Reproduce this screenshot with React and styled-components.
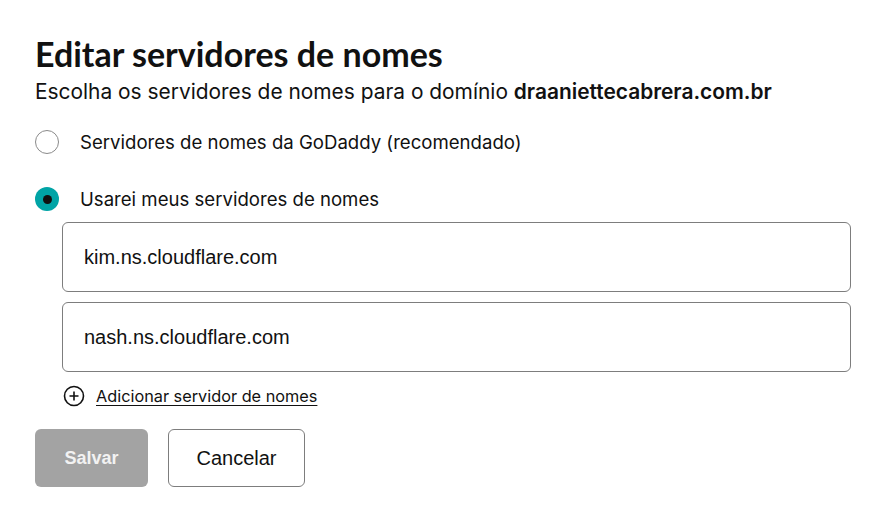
import styled, { createGlobalStyle } from "styled-components";

const GlobalStyle = createGlobalStyle`
  body {
    margin: 0;
    background: #ffffff;
    color: #111111;
    font-family: Inter, "Noto Sans", sans-serif;
  }
`;

const Page = styled.div`
  padding: 34px 35px 0 35px;
  width: 816px;
`;

const Title = styled.h1`
  margin: 0;
  font-family: Lato, "Noto Sans", sans-serif;
  font-size: 34px;
  font-weight: 700;
  line-height: 40px;
  color: #111111;
`;

const Subtitle = styled.p`
  margin: 4px 0 0 0;
  font-size: 20.9px;
  line-height: 28px;
  color: #111111;

  strong {
    font-weight: 600;
  }
`;

const Options = styled.div`
  margin-top: 24px;
  display: flex;
  flex-direction: column;
  gap: 33px;
`;

const RadioRow = styled.label`
  display: flex;
  align-items: center;
  gap: 21px;
  font-size: 18.6px;
  line-height: 24px;
  cursor: pointer;
`;

const RadioCircle = styled.span`
  box-sizing: border-box;
  width: 24px;
  height: 24px;
  border-radius: 50%;
  flex-shrink: 0;
  display: flex;
  align-items: center;
  justify-content: center;
  border: ${(p) => (p.$checked ? "none" : "1px solid #8a8a8a")};
  background: ${(p) => (p.$checked ? "#00a4a6" : "#ffffff")};

  &::after {
    content: "";
    display: ${(p) => (p.$checked ? "block" : "none")};
    width: 9px;
    height: 9px;
    border-radius: 50%;
    background: #111111;
  }
`;

const Fields = styled.div`
  margin: 11px 0 0 27px;
  display: flex;
  flex-direction: column;
  gap: 10px;
`;

const Field = styled.input`
  box-sizing: border-box;
  width: 789px;
  height: 70px;
  padding: 0 21px;
  border: 1px solid #7d7d7d;
  border-radius: 6px;
  font-family: "Liberation Sans", Arial, sans-serif;
  font-size: 20px;
  color: #111111;
  outline: none;
`;

const AddLink = styled.a`
  margin: 13px 0 0 28px;
  display: inline-flex;
  align-items: center;
  gap: 11px;
  font-size: 16.3px;
  color: #111111;
  cursor: pointer;

  span {
    text-decoration: underline;
    text-underline-offset: 3px;
  }
`;

const Actions = styled.div`
  margin-top: 18px;
  display: flex;
  gap: 20px;
`;

const Button = styled.button`
  box-sizing: border-box;
  height: 58px;
  padding: 0;
  border-radius: 6px;
  font-family: "Liberation Sans", Arial, sans-serif;
  font-size: ${(p) => (p.$primary ? 18 : 20)}px;
  font-weight: ${(p) => (p.$primary ? 700 : 400)};
  color: ${(p) => (p.$primary ? "#f2f2f2" : "#111111")};
  background: ${(p) => (p.$primary ? "#a3a3a3" : "#ffffff")};
  border: ${(p) => (p.$primary ? "none" : "1px solid #7d7d7d")};
  width: ${(p) => p.$width}px;
`;

function PlusCircle() {
  return (
    <svg width="22" height="22" viewBox="0 0 22 22" fill="none">
      <circle cx="11" cy="11" r="9.5" stroke="#111" strokeWidth="1.6" />
      <path d="M11 6.5v9M6.5 11h9" stroke="#111" strokeWidth="1.6" />
    </svg>
  );
}

export default function App() {
  return (
    <>
      <GlobalStyle />
      <Page>
        <Title>Editar servidores de nomes</Title>
        <Subtitle>
          Escolha os servidores de nomes para o domínio{" "}
          <strong>draaniettecabrera.com.br</strong>
        </Subtitle>
        <Options>
          <RadioRow>
            <RadioCircle />
            Servidores de nomes da GoDaddy (recomendado)
          </RadioRow>
          <RadioRow>
            <RadioCircle $checked />
            Usarei meus servidores de nomes
          </RadioRow>
        </Options>
        <Fields>
          <Field defaultValue="kim.ns.cloudflare.com" />
          <Field defaultValue="nash.ns.cloudflare.com" />
        </Fields>
        <AddLink>
          <PlusCircle />
          <span>Adicionar servidor de nomes</span>
        </AddLink>
        <Actions>
          <Button $primary $width={113} disabled>
            Salvar
          </Button>
          <Button $width={137}>Cancelar</Button>
        </Actions>
      </Page>
    </>
  );
}
